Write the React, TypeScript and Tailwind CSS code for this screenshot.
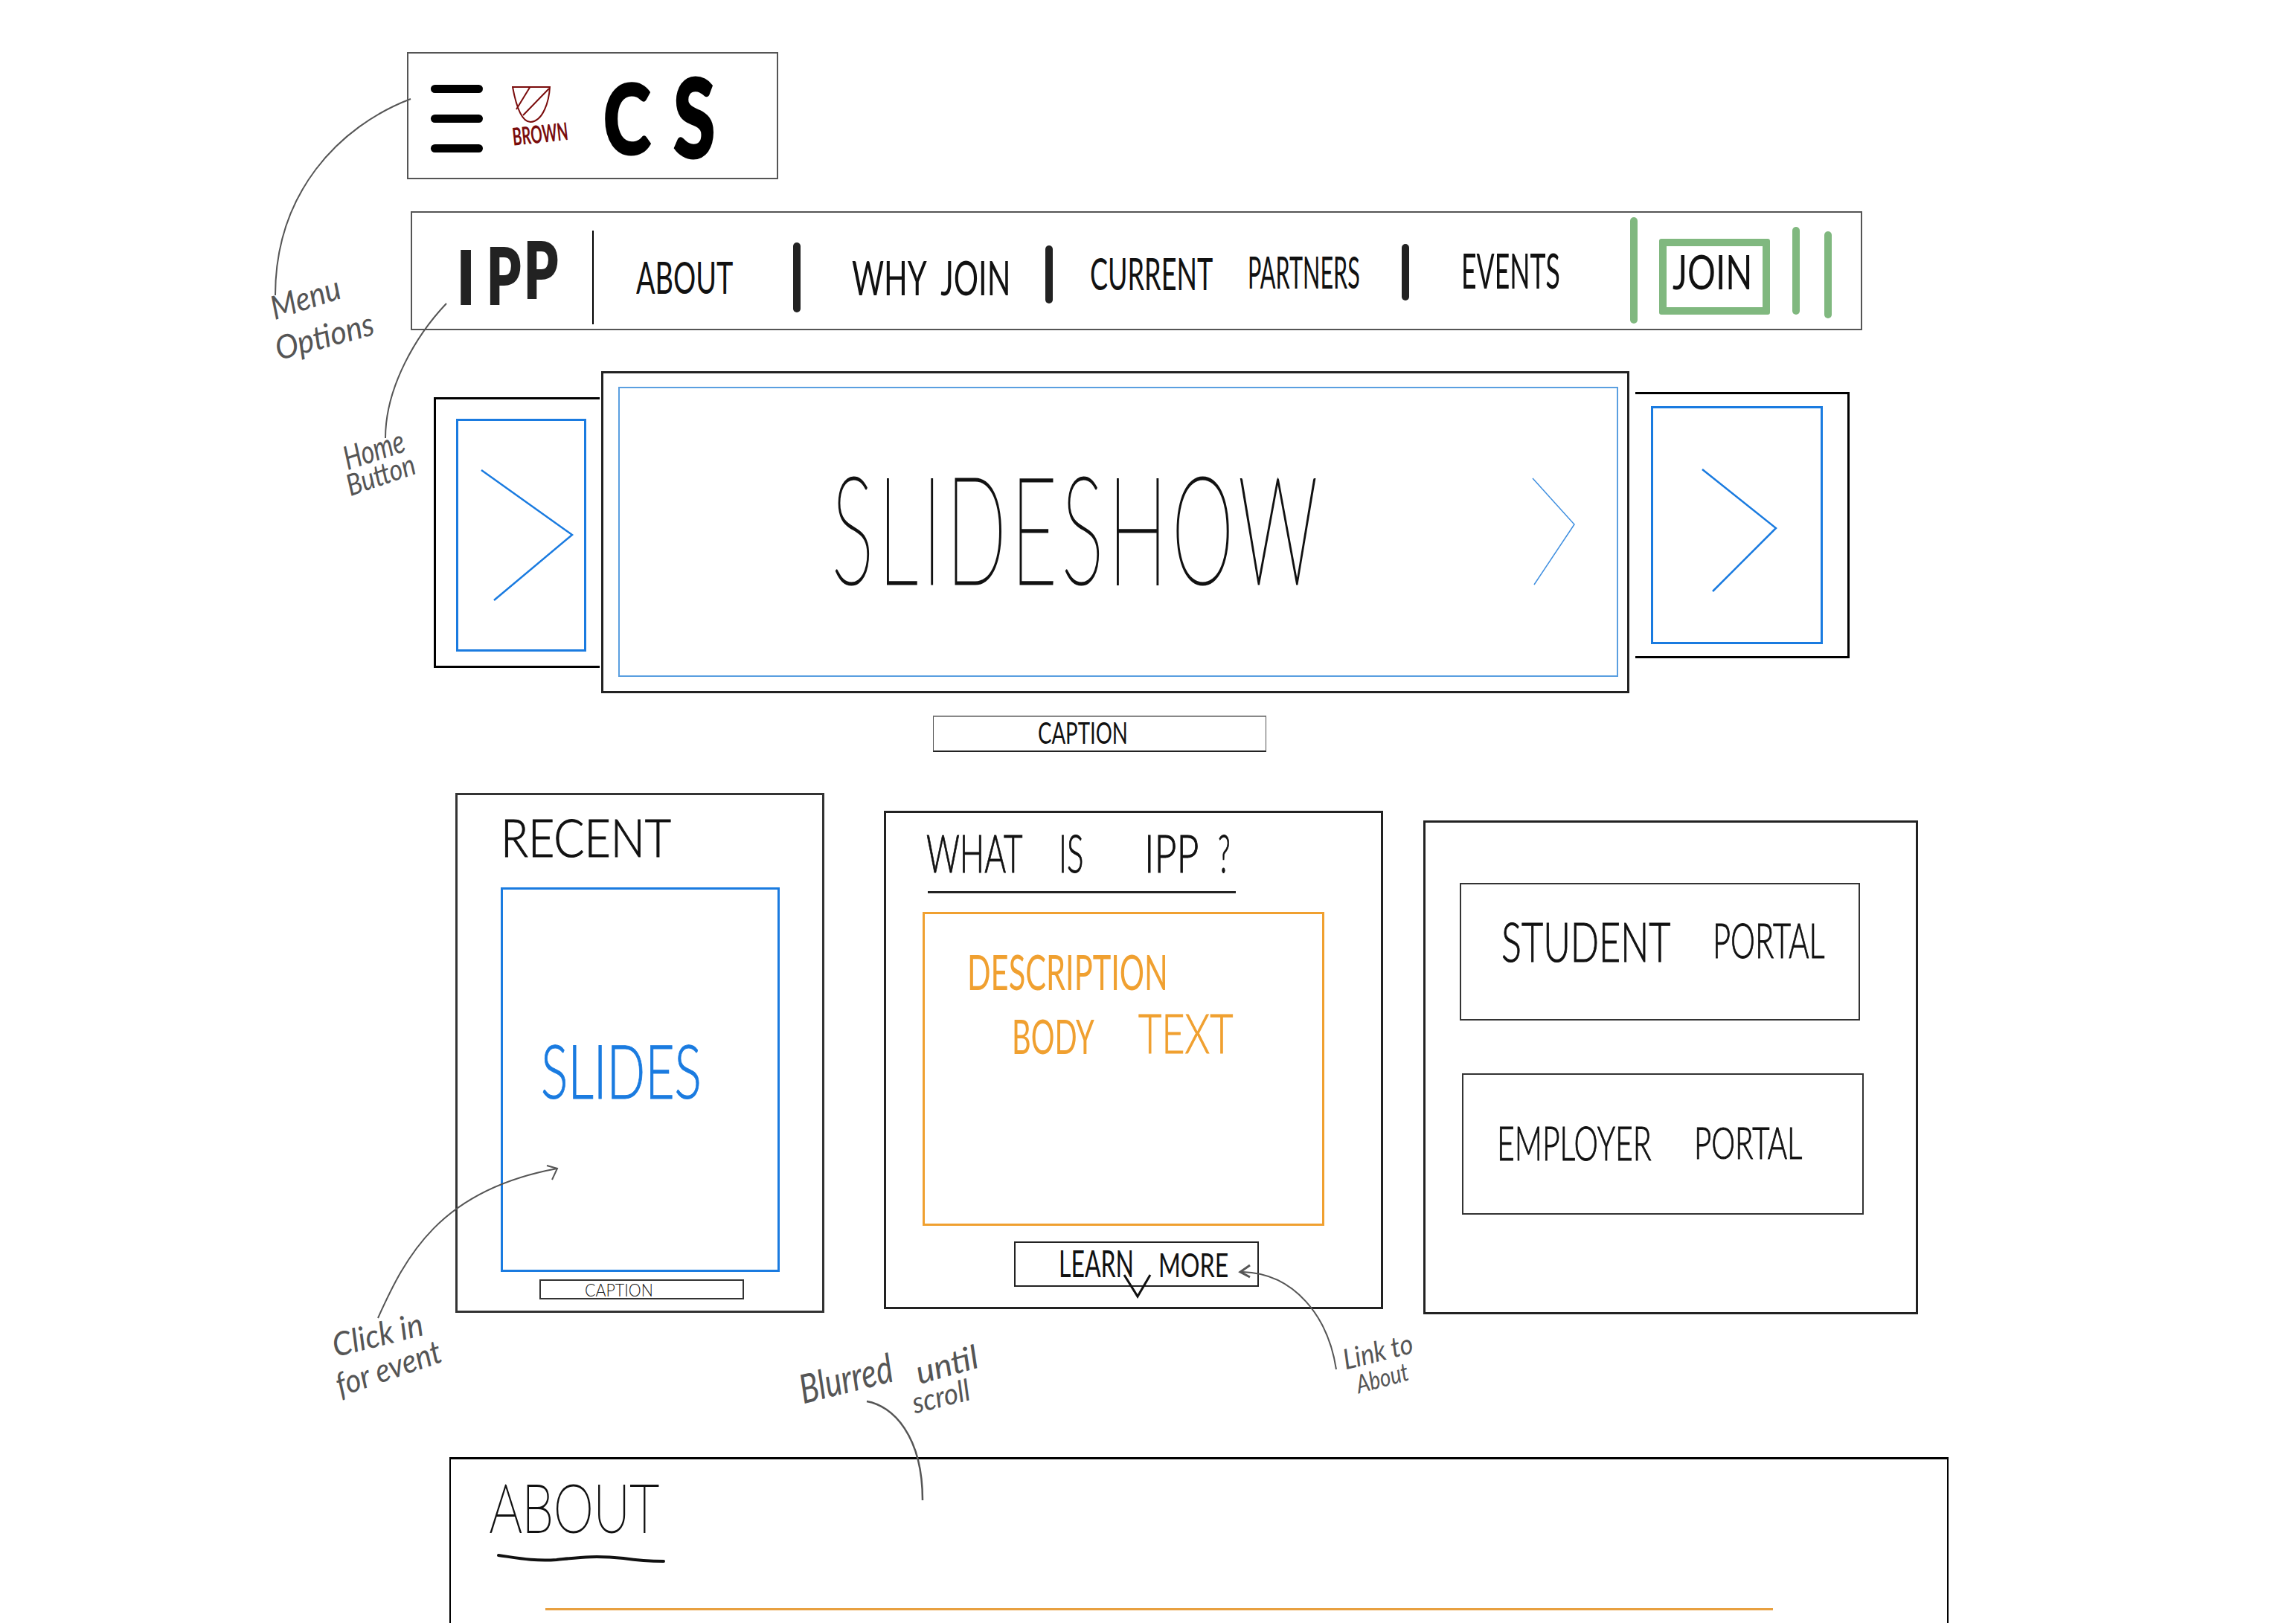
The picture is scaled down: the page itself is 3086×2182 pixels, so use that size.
import type { ReactNode } from 'react';
import clsx from 'clsx';

function Hand({ className, children }: { className?: string; children: ReactNode }) {
  return (
    <span className={clsx('block shrink-0 whitespace-pre leading-none origin-top-left', className)}>
      {children}
    </span>
  );
}

function Note({ className, children }: { className?: string; children: ReactNode }) {
  return (
    <span className={clsx('absolute whitespace-pre leading-none italic text-[#555] origin-left', className)}>
      {children}
    </span>
  );
}

export default function App() {
  return (
    <div className="relative w-[3086px] h-[2182px] overflow-hidden bg-white pt-[70px] text-[#111] [font-family:Lato,sans-serif]">
      {/* Mobile header */}
      <div className="ml-[547px] w-[499px] h-[171px] border-2 border-[#555] flex items-start">
        <div className="ml-[30px] mt-[42px] w-[70px] flex flex-col gap-[29px]">
          <div className="h-[11px] rounded-full bg-black" />
          <div className="h-[11px] rounded-full bg-black" />
          <div className="h-[11px] rounded-full bg-black" />
        </div>
        <div className="ml-[39px] mt-[44px] w-[75px]">
          <svg className="block" width="52" height="49" viewBox="0 0 52 49" fill="none" stroke="#7a0c0c" strokeWidth="2">
            <path d="M1 1 L51 1 C50 20 42 47 25 48 C14 48 6 28 1 1 Z" />
            <path d="M25 0 L6 31 M50 3 L15 39" />
          </svg>
          <Hand className="mt-[2px] -ml-[1px] w-[75px] text-[33px] font-bold text-[#7a0c0c] scale-x-[.58] rotate-[-6deg]">BROWN</Hand>
        </div>
        <Hand className="ml-[48px] mt-[20px] w-[59px] text-[130px] font-black text-black scale-x-[.74] [-webkit-text-stroke:3px]">C</Hand>
        <Hand className="ml-[35px] mt-[11px] w-[51px] text-[146px] font-black text-black scale-x-[.7] [-webkit-text-stroke:3px]">S</Hand>
      </div>

      {/* Desktop nav */}
      <div className="mt-[43px] ml-[552px] w-[1951px] h-[160px] border-2 border-[#555] flex items-start">
        <div className="ml-[60px] w-[136px] flex items-start text-[#222]">
          <Hand className="mt-[34px] w-[40px] text-[100px] font-black scale-x-[.8] [-webkit-text-stroke:2px]">I</Hand>
          <Hand className="mt-[30px] w-[50px] text-[105px] font-black scale-x-[.7] [-webkit-text-stroke:2px]">P</Hand>
          <Hand className="mt-[22px] w-[46px] text-[105px] font-black scale-x-[.7] [-webkit-text-stroke:2px]">P</Hand>
        </div>
        <div className="ml-[46px] mt-[24px] w-[2px] h-[126px] bg-black" />
        <Hand className="ml-[57px] mt-[56px] w-[130px] text-[60px] scale-x-[.63]">ABOUT</Hand>
        <div className="ml-[81px] mt-[40px] w-[10px] h-[94px] rounded-full bg-[#222]" />
        <Hand className="ml-[69px] mt-[55px] w-[213px] text-[64px] scale-x-[.65]">WHY  JOIN</Hand>
        <div className="ml-[47px] mt-[44px] w-[10px] h-[78px] rounded-full bg-[#222]" />
        <Hand className="ml-[50px] mt-[51px] w-[164px] text-[60px] scale-x-[.6]">CURRENT</Hand>
        <Hand className="ml-[48px] mt-[49px] w-[153px] text-[60px] scale-x-[.51]">PARTNERS</Hand>
        <div className="ml-[54px] mt-[42px] w-[10px] h-[76px] rounded-full bg-[#222]" />
        <Hand className="ml-[70px] mt-[44px] w-[132px] text-[66px] scale-x-[.54]">EVENTS</Hand>
        <div className="ml-[95px] mt-[6px] w-[10px] h-[143px] rounded-full bg-[#80b87f]" />
        <div className="ml-[29px] mt-[35px] w-[149px] h-[102px] border-[10px] border-[#80b87f] rounded-[3px] flex items-start">
          <Hand className="ml-[8px] mt-[2px] w-[106px] text-[64px] scale-x-[.74]">JOIN</Hand>
        </div>
        <div className="ml-[30px] mt-[19px] w-[10px] h-[118px] rounded-full bg-[#80b87f]" />
        <div className="ml-[33px] mt-[25px] w-[10px] h-[117px] rounded-full bg-[#80b87f]" />
      </div>

      {/* Slideshow */}
      <div className="mt-[55px] ml-[583px] flex items-start">
        <div className="mt-[35px] w-[223px] h-[364px] border-y-[3px] border-l-[3px] border-black pl-[27px] pt-[26px]">
          <div className="w-[175px] h-[313px] border-[3px] border-[#1a7be0]">
            <svg className="block w-full h-full" viewBox="0 0 169 307" fill="none" stroke="#1a7be0" strokeWidth="2.5">
              <path d="M31 66 L153 153 L48 241" />
            </svg>
          </div>
        </div>
        <div className="ml-[2px] w-[1382px] h-[433px] border-[3px] border-[#222] pl-[20px] pt-[18px]">
          <div className="w-[1344px] h-[390px] border-2 border-[#5a9fe0] flex items-start">
            <Hand className="ml-[285px] mt-[86px] w-[650px] text-[200px] font-thin tracking-[.06em] scale-x-[.53] [-webkit-text-stroke:3px]">SLIDESHOW</Hand>
            <svg className="ml-[290px] mt-[119px] shrink-0" width="60" height="147" viewBox="0 0 60 147" fill="none" stroke="#3f8fe0" strokeWidth="1.5">
              <path d="M2 2 L58 64 L4 145" />
            </svg>
          </div>
        </div>
        <div className="ml-[8px] mt-[28px] w-[288px] h-[358px] border-y-[3px] border-r-[3px] border-black pl-[21px] pt-[16px]">
          <div className="w-[231px] h-[320px] border-[3px] border-[#1a7be0]">
            <svg className="block w-full h-full" viewBox="0 0 225 314" fill="none" stroke="#1a7be0" strokeWidth="2.5">
              <path d="M66 82 L165 161 L80 246" />
            </svg>
          </div>
        </div>
      </div>

      {/* Caption */}
      <div className="mt-[30px] ml-[1254px] w-[448px] h-[49px] border-t-2 border-x border-b-2 border-t-[#888] border-x-[#555] border-b-[#222] flex items-start">
        <Hand className="ml-[140px] mt-[1px] w-[119px] text-[40px] scale-x-[.69]">CAPTION</Hand>
      </div>

      {/* Cards */}
      <div className="mt-[55px] ml-[612px] flex items-start">
        <div className="w-[496px] h-[699px] border-[3px] border-[#333]">
          <Hand className="ml-[58px] mt-[21px] w-[227px] text-[70px] font-light scale-x-[.87] [-webkit-text-stroke:1px]">RECENT</Hand>
          <div className="mt-[33px] ml-[58px] w-[375px] h-[517px] border-[3px] border-[#1a7be0]">
            <Hand className="ml-[51px] mt-[192px] w-[214px] text-[100px] font-light text-[#1a7be0] scale-x-[.68] [-webkit-text-stroke:1px]">SLIDES</Hand>
          </div>
          <div className="mt-[10px] ml-[110px] w-[275px] h-[27px] border-2 border-[#333]">
            <Hand className="ml-[59px] w-[92px] text-[24px] font-light scale-x-[.89]">CAPTION</Hand>
          </div>
        </div>

        <div className="ml-[80px] mt-[24px] w-[671px] h-[670px] border-[3px] border-[#222]">
          <div className="mt-[18px] flex items-start text-[70px] font-light [-webkit-text-stroke:1px]">
            <Hand className="ml-[54px] w-[129px] scale-x-[.63]">WHAT</Hand>
            <Hand className="ml-[49px] w-[34px] scale-x-[.6]">IS</Hand>
            <Hand className="ml-[81px] w-[75px] scale-x-[.74]">IPP</Hand>
            <Hand className="ml-[24px] w-[20px] scale-x-[.55]">?</Hand>
          </div>
          <div className="mt-[17px] ml-[56px] w-[414px] h-[3px] bg-[#222]" />
          <div className="mt-[25px] ml-[49px] w-[540px] h-[422px] border-[3px] border-[#f0a030]">
            <Hand className="ml-[57px] mt-[44px] w-[267px] text-[66px] text-[#f0a030] scale-x-[.63]">DESCRIPTION</Hand>
            <div className="mt-[13px] flex items-start text-[#f0a030]">
              <Hand className="ml-[117px] mt-[9px] w-[111px] text-[64px] scale-x-[.62]">BODY</Hand>
              <Hand className="ml-[59px] w-[125px] text-[72px] font-light scale-x-[.75] [-webkit-text-stroke:1px]">TEXT</Hand>
            </div>
          </div>
          <div className="mt-[21px] ml-[172px] w-[329px] h-[61px] border-2 border-[#222] flex items-start">
            <Hand className="ml-[58px] mt-[2px] w-[101px] text-[50px] scale-x-[.64]">LEARN</Hand>
            <Hand className="ml-[33px] mt-[7px] w-[94px] text-[44px] scale-x-[.73]">MORE</Hand>
          </div>
        </div>

        <div className="ml-[54px] mt-[37px] w-[665px] h-[664px] border-[3px] border-[#222]">
          <div className="mt-[81px] ml-[46px] w-[538px] h-[185px] border-2 border-[#333] flex items-start">
            <Hand className="ml-[54px] mt-[40px] w-[229px] text-[72px] font-light scale-x-[.7] [-webkit-text-stroke:1px]">STUDENT</Hand>
            <Hand className="ml-[55px] mt-[41px] w-[151px] text-[66px] font-light scale-x-[.63] [-webkit-text-stroke:1px]">PORTAL</Hand>
          </div>
          <div className="mt-[71px] ml-[49px] w-[540px] h-[190px] border-2 border-[#333] flex items-start">
            <Hand className="ml-[45px] mt-[59px] w-[208px] text-[64px] font-light scale-x-[.64] [-webkit-text-stroke:1px]">EMPLOYER</Hand>
            <Hand className="ml-[57px] mt-[60px] w-[147px] text-[60px] font-light scale-x-[.67] [-webkit-text-stroke:1px]">PORTAL</Hand>
          </div>
        </div>
      </div>

      {/* About */}
      <div className="mt-[192px] ml-[604px] w-[2015px] h-[260px] border-t-[3px] border-x-2 border-black">
        <Hand className="ml-[52px] mt-[18px] w-[229px] text-[90px] font-thin scale-x-[.76] [-webkit-text-stroke:2px]">ABOUT</Hand>
        <svg className="block ml-[62px] mt-[18px]" width="226" height="14" viewBox="0 0 226 14" fill="none" stroke="#111" strokeWidth="4" strokeLinecap="round">
          <path d="M2 3 C30 7 50 11 80 9 C110 6 130 3 170 7 C190 10 210 11 224 11" />
        </svg>
        <div className="mt-[60px] ml-[127px] w-[1650px] h-[3px] bg-[#e8a040]" />
      </div>

      {/* Annotation strokes */}
      <svg className="absolute inset-0 w-full h-full pointer-events-none" viewBox="0 0 3086 2182" fill="none" stroke="#555" strokeWidth="2">
        <path d="M552 133 C455 170 370 260 370 397" />
        <path d="M600 408 C560 450 518 520 518 589" />
        <path d="M508 1772 C545 1690 590 1600 749 1571" />
        <path d="M735 1567 L749 1571 L742 1586" />
        <path d="M1796 1841 C1785 1770 1740 1712 1670 1710" />
        <path d="M1680 1701 L1667 1710 L1680 1717" strokeWidth="3" />
        <path d="M1165 1884 C1200 1890 1240 1930 1240 2017" strokeWidth="2.5" />
        <path d="M1511 1714 L1529 1743 L1546 1714" stroke="#111" strokeWidth="3" />
      </svg>

      {/* Annotation notes */}
      <Note className="left-[364px] top-[392px] text-[44px] scale-x-[.92] rotate-[-18deg]">Menu</Note>
      <Note className="left-[370px] top-[446px] text-[44px] scale-x-[.94] rotate-[-15deg]">Options</Note>
      <Note className="left-[462px] top-[594px] text-[44px] scale-x-[.77] rotate-[-18deg]">Home</Note>
      <Note className="left-[466px] top-[633px] text-[40px] scale-x-[.85] rotate-[-19deg]">Button</Note>
      <Note className="left-[447px] top-[1786px] text-[44px] scale-x-[.94] rotate-[-14deg]">Click in</Note>
      <Note className="left-[452px] top-[1840px] text-[44px] scale-x-[.91] rotate-[-19deg]">for event</Note>
      <Note className="left-[1075px] top-[1841px] text-[54px] scale-x-[.78] rotate-[-14deg]">Blurred</Note>
      <Note className="left-[1231px] top-[1823px] text-[44px] scale-x-[1.05] rotate-[-16deg]">until</Note>
      <Note className="left-[1226px] top-[1866px] text-[40px] scale-x-[.92] rotate-[-14deg]">scroll</Note>
      <Note className="left-[1805px] top-[1808px] text-[38px] scale-x-[.9] rotate-[-14deg]">Link to</Note>
      <Note className="left-[1823px] top-[1844px] text-[34px] scale-x-[.82] rotate-[-15deg]">About</Note>
    </div>
  );
}
